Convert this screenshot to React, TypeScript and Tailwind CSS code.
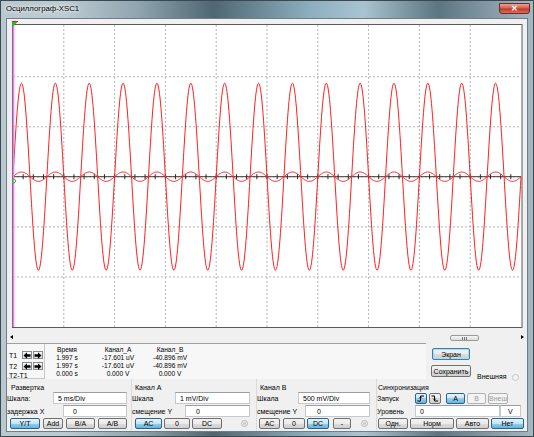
import React from "react";

// plot geometry, in screen pixels of the window
const X0 = 13;
const X1 = 521;
const Y0 = 26.7;
const YC = 176.7;
const DX = (X1 - X0) / 10;
const DY = 50.05;
const PERIOD = (X1 - X0) / 15;

function wave(amp: number) {
  let d = "";
  for (let x = X0; x <= X1 + 0.01; x += 0.5) {
    const y = YC - amp * Math.sin((2 * Math.PI * (x - X0)) / PERIOD);
    d += (d ? "L" : "M") + x.toFixed(1) + " " + y.toFixed(2);
  }
  return d;
}

const BTN =
  "flex items-center justify-center rounded-[2px] border border-[#707070] bg-[linear-gradient(#f2f2f2,#ebebeb_50%,#dddddd_50%,#cfcfcf)] text-black";
const BTN_ON =
  "flex items-center justify-center rounded-[2px] border border-[#2c628b] bg-[linear-gradient(#e5f4fc,#c4e5f6_50%,#98d1ef_50%,#68b3db)] text-black";
const BTN_OFF =
  "flex items-center justify-center rounded-[2px] border border-[#adb2b5] bg-[#f4f4f4] text-[#9a9a9a]";

function Btn({
  w,
  kind = "n",
  children,
}: {
  w: string;
  kind?: "n" | "on" | "off";
  children?: React.ReactNode;
}) {
  const base = kind === "on" ? BTN_ON : kind === "off" ? BTN_OFF : BTN;
  return <div className={`${base} ${w} h-full`}>{children}</div>;
}

function Field({ w, pl, children }: { w: string; pl: string; children?: React.ReactNode }) {
  return (
    <div
      className={`${w} ${pl} h-full flex items-center bg-white border border-[#c5c8cc] border-t-[#9a9da2]`}
    >
      {children}
    </div>
  );
}

function GndIcon() {
  return (
    <div className="w-[7px] h-[7px] rounded-full border border-[#b8b8b8] flex items-center justify-center">
      <div className="w-[3px] h-[3px] rounded-full bg-[#c8c8c8]" />
    </div>
  );
}

function Arrow({ dir }: { dir: "l" | "r" }) {
  return (
    <div className="w-[10px] h-full flex items-center justify-center border border-[#8a8a8a] bg-[linear-gradient(#fafafa,#dcdcdc)]">
      <svg width="8" height="7" viewBox="0 0 8 7">
        {dir === "l" ? (
          <path d="M0.5 3.5 L4 0.3 V2.3 H7.5 V4.7 H4 V6.7 Z" fill="#000" />
        ) : (
          <path d="M7.5 3.5 L4 0.3 V2.3 H0.5 V4.7 H4 V6.7 Z" fill="#000" />
        )}
      </svg>
    </div>
  );
}

function Plot() {
  const vx = Array.from({ length: 9 }, (_, i) => X0 + DX * (i + 1));
  const hy = Array.from({ length: 5 }, (_, i) => Y0 + DY * (i + 1));
  const ticks = Array.from({ length: 49 }, (_, i) => X0 + (DX / 5) * (i + 1));
  return (
    <svg width="511" height="308" viewBox="12 20 511 308" className="block">
      <rect x="12.5" y="24.5" width="509.5" height="303" fill="#fff" stroke="#5a5a5a" />
      {vx.map((x) => (
        <line key={x} x1={x} y1={25} x2={x} y2={327} stroke="#b4b4b4" strokeDasharray="2 2" />
      ))}
      {hy.map((y) => (
        <line key={y} x1={13} y1={y} x2={521} y2={y} stroke="#b4b4b4" strokeDasharray="2 2" />
      ))}
      <line x1={13} y1={YC} x2={521} y2={YC} stroke="#3a3a3a" strokeWidth="1" />
      {ticks.map((x) => (
        <line key={x} x1={x} y1={YC - 2.5} x2={x} y2={YC + 2.5} stroke="#2a2a2a" />
      ))}
      <path d={wave(93.5)} fill="none" stroke="#ff1e1e" strokeWidth="1" />
      <path d={wave(4.7)} fill="none" stroke="#ff1e1e" strokeWidth="1" />
      <line x1={13.5} y1={25} x2={13.5} y2={327} stroke="#f080f0" strokeWidth="1.6" />
      <line x1={9} y1={21.5} x2={18} y2={21.5} stroke="#e02020" />
      <path d="M9.5 22 H17.5 L13.5 26 Z" fill="#22c022" />
      <circle cx={13.5} cy={181} r={2} fill="none" stroke="#22c022" />
    </svg>
  );
}

function Readout() {
  return (
    <div className="w-[419px] h-full flex border-t border-[#a0a0a0] bg-[#f7f7f7]">
      <div className="w-[38px] h-full flex flex-col pt-[7px] pl-[2px] border-r border-b border-[#c8c8c8]">
        <div className="h-[8px] flex items-center">
          <span className="w-[13px]">T1</span>
          <Arrow dir="l" />
          <div className="w-[1px]" />
          <Arrow dir="r" />
        </div>
        <div className="h-[8px] mt-[3px] flex items-center">
          <span className="w-[13px]">T2</span>
          <Arrow dir="l" />
          <div className="w-[1px]" />
          <Arrow dir="r" />
        </div>
        <div className="h-[8px] mt-[2px] flex items-center">T2-T1</div>
      </div>
      <div className="flex pt-[2px] text-[6.6px] leading-[8px]">
        <div className="w-[44px] flex flex-col items-center">
          <span>Время</span>
          <span>1.997 s</span>
          <span>1.997 s</span>
          <span>0.000 s</span>
        </div>
        <div className="w-[58px] flex flex-col items-center">
          <span>Канал_А</span>
          <span>-17.601 uV</span>
          <span>-17.601 uV</span>
          <span>0.000 V</span>
        </div>
        <div className="w-[46px] flex flex-col items-center">
          <span>Канал_В</span>
          <span>-40.896 mV</span>
          <span>-40.896 mV</span>
          <span>0.000 V</span>
        </div>
      </div>
    </div>
  );
}

export default function App() {
  return (
    <div className="w-[534px] h-[437px] flex flex-col overflow-hidden text-[7px] leading-none text-black [font-family:'Liberation_Sans',Arial,sans-serif] shadow-[inset_0_0_0_1px_#3a4850] bg-[linear-gradient(90deg,#b9c8cf_0%,#bccbd2_12%,#8ea4af_26%,#4f6772_40%,#8daebf_58%,#a9c3d0_68%,#5c7583_82%,#a6b8c2_100%)]">
      {/* title bar */}
      <div className="h-[19px] flex items-start justify-between pl-[6px] pr-[4px]">
        <span className="mt-[5px] text-[7.8px] [text-shadow:0_0_5px_#ffffff,0_0_3px_#ffffff]">
          Осциллограф-XSC1
        </span>
        <div className="mt-[3px] w-[31px] h-[11px] rounded-b-[3px] border border-[#6b2b24] bg-[linear-gradient(#e8a496,#d5614f_45%,#c0372a_55%,#d8705c)] flex items-center justify-center text-white text-[8px] font-bold">
          ✕
        </div>
      </div>

      {/* client */}
      <div className="flex-1 px-[7px] pb-[6px] flex">
        <div className="flex-1 bg-[#f0f0f0] flex flex-col ring-1 ring-[#6e7f89]">
          <div className="pl-[5px] pt-[1px] h-[309px]">
            <Plot />
          </div>

          {/* scroll row */}
          <div className="h-[15px] flex items-start">
            <span className="ml-[3px] mt-[7px] w-0 h-0 border-y-[2.5px] border-y-transparent border-r-[3px] border-r-black" />
            <div className="ml-auto mt-[7px] w-[29px] h-[6px] rounded-[2px] border border-[#9a9a9a] bg-[linear-gradient(#f6f6f6,#dcdcdc)] flex items-center justify-center gap-[1px]">
              <div className="w-[1px] h-[3px] bg-[#777]" />
              <div className="w-[1px] h-[3px] bg-[#777]" />
              <div className="w-[1px] h-[3px] bg-[#777]" />
            </div>
            <span className="ml-[42px] mt-[7px] w-0 h-0 border-y-[2.5px] border-y-transparent border-l-[3px] border-l-black" />
            <div className="w-[3px]" />
          </div>

          {/* readout + screen buttons */}
          <div className="h-[36px] flex">
            <Readout />
            <div className="flex-1 flex flex-col">
              <div className="ml-[6px] mt-[5px] w-[38px] h-[12px] rounded-[2px] border border-[#3c7fb1] shadow-[inset_0_0_0_1px_#a8dcf7] bg-[linear-gradient(#f2f2f2,#ebebeb_50%,#dddddd_50%,#cfcfcf)] flex items-center justify-center">
                Экран
              </div>
              <div className="mt-[5px] flex items-end">
                <div className="ml-[5px] w-[40px] h-[12px] rounded-[2px] border border-[#707070] bg-[linear-gradient(#f2f2f2,#ebebeb_50%,#dddddd_50%,#cfcfcf)] flex items-center justify-center">
                  Сохранить
                </div>
                <span className="ml-[6px] mb-[-3px]">Внешняя</span>
                <div className="ml-[5px] mb-[-4px] w-[7px] h-[7px] rounded-full border border-[#c4c4c4] bg-[#f4f4f4]" />
              </div>
            </div>
          </div>

          {/* control groups */}
          <div className="flex-1 flex">
            {/* Развертка */}
            <div className="w-[124px] flex flex-col pt-[5px]">
              <div className="h-[8px] pl-[4px]">Развертка</div>
              <div className="h-[12px] flex items-center">
                <span className="w-[46px]">Шкала:</span>
                <Field w="w-[74px]" pl="pl-[4px]">5 ms/Div</Field>
              </div>
              <div className="h-[12px] mt-[1px] flex items-center">
                <span className="w-[56px]">задержка X</span>
                <Field w="w-[64px]" pl="pl-[9px]">0</Field>
              </div>
              <div className="h-[11px] mt-[1px] flex pl-[3px] gap-[3px]">
                <Btn w="w-[30px]" kind="on">Y/T</Btn>
                <Btn w="w-[20px]">Add</Btn>
                <Btn w="w-[29px]">B/A</Btn>
                <Btn w="w-[29px]">A/B</Btn>
              </div>
            </div>

            {/* Канал A */}
            <div className="w-[125px] flex flex-col pt-[5px] border-l border-[#dadada]">
              <div className="h-[8px] pl-[3px]">Канал A</div>
              <div className="h-[12px] flex items-center">
                <span className="w-[43px]">Шкала</span>
                <Field w="w-[75px]" pl="pl-[4px]">1 mV/Div</Field>
              </div>
              <div className="h-[12px] mt-[1px] flex items-center">
                <span className="w-[53px]">смещение Y</span>
                <Field w="w-[65px]" pl="pl-[10px]">0</Field>
              </div>
              <div className="h-[11px] mt-[1px] flex items-center pl-[3px] gap-[2px]">
                <Btn w="w-[27px]" kind="on">AC</Btn>
                <Btn w="w-[26px]">0</Btn>
                <Btn w="w-[30px]">DC</Btn>
                <div className="ml-[17px]">
                  <GndIcon />
                </div>
              </div>
            </div>

            {/* Канал B */}
            <div className="w-[120px] flex flex-col pt-[5px] border-l border-[#dadada]">
              <div className="h-[8px] pl-[3px]">Канал B</div>
              <div className="h-[12px] flex items-center">
                <span className="w-[41px]">Шкала</span>
                <Field w="w-[72px]" pl="pl-[4px]">500 mV/Div</Field>
              </div>
              <div className="h-[12px] mt-[1px] flex items-center">
                <span className="w-[48px]">смещение Y</span>
                <Field w="w-[65px]" pl="pl-[11px]">0</Field>
              </div>
              <div className="h-[11px] mt-[1px] flex items-center pl-[2px]">
                <Btn w="w-[21px]">AC</Btn>
                <div className="w-[3px]" />
                <Btn w="w-[22px]">0</Btn>
                <div className="w-[2px]" />
                <Btn w="w-[22px]" kind="on">DC</Btn>
                <div className="w-[4px]" />
                <Btn w="w-[18px]">-</Btn>
                <div className="ml-[10px]">
                  <GndIcon />
                </div>
              </div>
            </div>

            {/* Синхронизация */}
            <div className="w-[151px] flex flex-col pt-[5px] border-l border-[#dadada]">
              <div className="h-[8px] pl-[1px]">Синхронизация</div>
              <div className="h-[12px] flex items-center">
                <span className="w-[38px]">Запуск</span>
                <div className="h-[11px] flex">
                  <Btn w="w-[12px]" kind="on">
                    <svg width="8" height="7" viewBox="0 0 8 7">
                      <path d="M0.5 6 H3.5 V1 H7" fill="none" stroke="#000" strokeWidth="1" />
                      <path d="M2 3.5 L3.5 2 L5 3.5" fill="none" stroke="#000" strokeWidth="0.8" />
                    </svg>
                  </Btn>
                  <div className="w-[2px]" />
                  <Btn w="w-[12px]">
                    <svg width="8" height="7" viewBox="0 0 8 7">
                      <path d="M0.5 1 H3.5 V6 H7" fill="none" stroke="#000" strokeWidth="1" />
                      <path d="M2 3.5 L3.5 5 L5 3.5" fill="none" stroke="#000" strokeWidth="0.8" />
                    </svg>
                  </Btn>
                  <div className="w-[5px]" />
                  <Btn w="w-[19px]" kind="on">A</Btn>
                  <div className="w-[2px]" />
                  <Btn w="w-[19px]" kind="off">B</Btn>
                  <div className="w-[2px]" />
                  <Btn w="w-[20px]" kind="off">Внеш</Btn>
                </div>
              </div>
              <div className="h-[12px] mt-[1px] flex items-center">
                <span className="w-[38px]">Уровень</span>
                <Field w="w-[85px]" pl="pl-[4px]">0</Field>
                <Field w="w-[21px]" pl="pl-[7px]">V</Field>
              </div>
              <div className="h-[11px] mt-[1px] flex pl-[1px] gap-[2px]">
                <Btn w="w-[30px]">Одн.</Btn>
                <Btn w="w-[44px]">Норм</Btn>
                <Btn w="w-[33px]">Авто</Btn>
                <Btn w="w-[33px]" kind="on">Нет</Btn>
              </div>
            </div>
          </div>
        </div>
      </div>
    </div>
  );
}
